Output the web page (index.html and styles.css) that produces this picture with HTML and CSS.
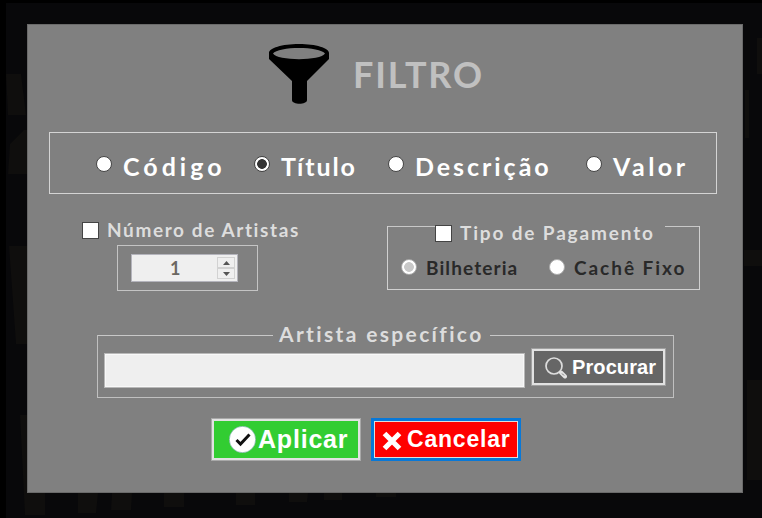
FILE: index.html
```html
<!DOCTYPE html>
<html lang="pt">
<head>
<meta charset="utf-8">
<title>Filtro</title>
<link rel="stylesheet" href="styles.css">
</head>
<body>
<svg class="backdrop" viewBox="0 0 762 518" aria-hidden="true">
  <path fill="#000" d="M0 0H762V3H6V518H0z"/>
  <g fill="#0f0e0d">
    <path d="M6 74h15l5 41H8zM24 130h4v44H8l2-30zM9 246h19l-1 98H16zM20 415h8v78h17v22H25zM78 493h20l-2 20H78zM112 493h20l-1 17h-20zM164 493h20v14h-20zM236 493h19v12h-19zM289 493h19l-1 9h-18zM324 493h18v7h-18zM376 493h20v4h-20z"/>
    <path d="M757 38h5v36h-5zM745 90h4v48h-4zM744 250h18v16h-18zM747 380h15v100h-15z"/>
  </g>
</svg>
<main class="dialog">
  <header class="header">
    <svg class="funnel" viewBox="0 0 60 60"><path fill-rule="evenodd" d="M0 9C0 4 13 0 30 0s30 4 30 9v6L38 37v19c0 5-15 5-15 0V37L0 15zM4 9.500C8 17 52 17 56 9.500 51 2 9 2 4 9.500z"/></svg>
    <h1 class="title">FILTRO</h1>
  </header>
  <section class="fields">
    <label class="option codigo"><i class="radio"></i><span>Código</span></label>
    <label class="option titulo"><i class="radio checked"></i><span>Título</span></label>
    <label class="option descricao"><i class="radio"></i><span>Descrição</span></label>
    <label class="option valor"><i class="radio"></i><span>Valor</span></label>
  </section>
  <div class="middle">
    <section class="artists">
      <label class="check"><i class="box"></i><span class="t-numero">Número de Artistas</span></label>
      <div class="frame">
        <div class="spinner"><span class="value">1</span>
          <div class="arrows"><b><svg viewBox="0 0 7 4"><path d="M0 4 3.500 0 7 4z"/></svg></b><b><svg viewBox="0 0 7 4"><path d="M0 0 3.500 4 7 0z"/></svg></b></div>
        </div>
      </div>
    </section>
    <section class="payment">
      <div class="legend"><span class="rule left"></span><label class="check"><i class="box"></i><span class="t-tipo">Tipo de Pagamento</span></label><span class="rule right"></span></div>
      <div class="choices">
        <label class="choice"><i class="radio off picked"></i><span class="t-bilheteria">Bilheteria</span></label>
        <label class="choice"><i class="radio off"></i><span class="t-cache">Cachê Fixo</span></label>
      </div>
    </section>
  </div>
  <section class="specific">
    <div class="legend"><span class="rule left"></span><span class="t-artista">Artista específico</span><span class="rule right"></span></div>
    <div class="search">
      <div class="input"></div>
      <button class="find"><svg viewBox="0 0 22 22" fill="none"><circle cx="9" cy="9" r="8" stroke="#ddd" stroke-width="1.700"/><path d="m16 15.500 4 4" stroke="#e4e4e4" stroke-width="4" stroke-linecap="round"/><path d="m17 16.500 2 2" stroke="#777" stroke-width="1"/></svg><span class="t-procurar">Procurar</span></button>
    </div>
  </section>
  <footer class="actions">
    <button class="apply"><svg viewBox="0 0 27 27"><circle cx="13.500" cy="13.500" r="13.200" fill="#fff" stroke="#6aa5a0" stroke-width=".6"/><path d="m7.500 14 4 4L20.500 8.500" fill="none" stroke="#111" stroke-width="3"/></svg><span class="t-aplicar">Aplicar</span></button>
    <button class="cancel"><svg viewBox="0 0 20 20"><path d="m2.500 2.500 15 15m0-15-15 15" stroke="#fff" stroke-width="5.200"/></svg><span class="t-cancelar">Cancelar</span></button>
  </footer>
</main>
</body>
</html>
```
FILE: styles.css
```css
* { box-sizing: border-box; }
body { margin: 0; width: 762px; height: 518px; overflow: hidden; background: #08080a; font-family: Lato, sans-serif; font-weight: 700; padding: 24px 19px 25px 27px; }
span { white-space: nowrap; }
svg { display: block; flex: none; }
.backdrop { position: absolute; inset: 0; width: 762px; height: 518px; }
.dialog { position: relative; width: 716px; height: 469px; background: #808080; border: 1px solid #6a6a6a; padding: 19px 0 0 20px; }
.header { display: flex; height: 88px; padding-left: 221px; }
.funnel { width: 60px; height: 60px; }
.title { margin: 9px 0 0 24px; font-size: 36px; line-height: 43px; font-weight: 700; color: #c0c0c0; letter-spacing: 1.800px; }
.fields { display: flex; align-items: center; width: 668px; height: 62px; margin-left: 1px; border: 1px solid #d4d4d4; padding: 5px 0 0 46px; }
.option { display: flex; align-items: center; color: #fff; font-size: 25px; line-height: 30px; }
.radio { display: block; width: 16px; height: 16px; border-radius: 50%; background: #fff; border: 1px solid #444; flex: none; margin: -3px 11px 0 0; }
.radio.checked { background: radial-gradient(circle, #333 0 4.500px, #fff 5.200px); }
.codigo { width: 158px; letter-spacing: 4px; }
.titulo { width: 134px; letter-spacing: 1.900px; }
.descricao { width: 198px; letter-spacing: 2.950px; }
.valor { letter-spacing: 3.500px; }
.middle { display: flex; justify-content: space-between; align-items: flex-start; width: 652px; height: 150px; padding: 25px 0 0 34px; }
.check { display: flex; align-items: center; color: #ddd; font-size: 19px; line-height: 22px; }
.box { display: block; width: 17px; height: 17px; background: #fff; border: 1px solid #444; flex: none; margin-right: 8px; }
.t-numero { letter-spacing: 1.600px; }
.frame { width: 141px; height: 46px; margin: 4px 0 0 35px; border: 1px solid #c4c4c4; padding: 8px 0 0 13px; }
.spinner { display: flex; justify-content: space-between; width: 107px; height: 28px; background: #efefef; border: 1px solid #b4b4bc; padding: 2px 2px 0 38px; }
.value { color: #6b6762; font-size: 18px; line-height: 22px; }
.arrows { width: 18px; }
.arrows b { display: flex; align-items: center; justify-content: center; height: 11px; border: 1px solid #d2d2d2; }
.arrows svg { width: 7px; height: 4px; fill: #555; }
.legend { display: flex; }
.rule { height: 1px; background: #c8c8c8; }
.payment { width: 313px; height: 64px; border: 1px solid #d0d0d0; border-top: 0; margin-top: 7px; }
.payment .legend { height: 28px; }
.payment .check { margin-top: -4px; height: 22px; }
.payment .left { width: 47px; }
.payment .right { width: 34px; margin-left: auto; }
.t-tipo { letter-spacing: 1.850px; }
.choices { display: flex; padding: 3px 0 0 13px; color: #292929; font-size: 19px; line-height: 22px; }
.choice { display: flex; align-items: center; width: 148px; }
.choice .radio { margin-right: 9px; }
.t-bilheteria { letter-spacing: 1.100px; }
.t-cache { letter-spacing: 1.950px; }
.radio.off { border-color: #aaa; }
.radio.picked { background: radial-gradient(circle, #c8c8c8 0 4.500px, #fff 5.200px); }
.specific { width: 577px; height: 63px; margin: -9px 0 0 49px; border: 1px solid #c0c0c0; border-top: 0; }
.specific .legend { height: 13px; color: #ddd; }
.specific .left { width: 175px; }
.specific .right { width: 183px; margin-left: auto; }
.t-artista { margin: -14px 0 0 6px; font-size: 21px; line-height: 26px; letter-spacing: 2.350px; }
.search { display: flex; padding-left: 6px; }
.input { width: 421px; height: 35px; margin-top: 5px; background: #efefef; border: 1px solid #b8b8b8; box-shadow: inset 0 0 0 1px #f8f8f8; }
button { display: flex; align-items: center; margin: 0; padding: 0; color: #fff; font-family: "Liberation Sans", sans-serif; font-weight: 700; }
.find { width: 135px; height: 38px; margin-left: 6px; background: #666; border: 3px solid #e2e2e2; outline: 1px solid #a0a0a0; outline-offset: -1px; padding-left: 11px; }
.find svg { width: 22px; height: 22px; margin-top: 2px; }
.find span { font-size: 20px; margin-left: 5px; letter-spacing: .1px; }
.actions { display: flex; gap: 10px; margin: 20px 0 0 163px; }
.apply { width: 150px; height: 43px; background: #32cd32; border: 3px solid #e2e2e2; outline: 1px solid #a8a8a8; outline-offset: -1px; padding-left: 15px; }
.apply svg { width: 27px; height: 27px; }
.apply span { font-size: 25px; margin-left: 2px; letter-spacing: .8px; }
.cancel { width: 150px; height: 43px; background: #f00; border: 3px solid #0878d7; box-shadow: inset 0 0 0 1px #ddd; padding-left: 8px; }
.cancel svg { width: 20px; height: 20px; margin-top: 3px; }
.cancel span { font-size: 23px; margin-left: 5px; letter-spacing: .8px; }
```
